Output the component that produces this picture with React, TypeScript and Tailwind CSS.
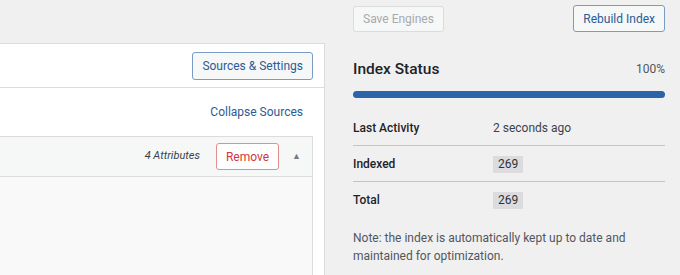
import React from "react";

const font = { fontFamily: 'Roboto, "Noto Sans", sans-serif' };

function StatRow({ label, children, last }: { label: string; children: React.ReactNode; last?: boolean }) {
  return (
    <div
      className={`grid h-[36px] grid-cols-[140px_1fr] items-center ${last ? "" : "border-b border-[#c3c4c7]"}`}
    >
      <span className="text-[12px] font-medium text-[#1d2327]">{label}</span>
      <span className="text-[12px] text-[#3c434a]">{children}</span>
    </div>
  );
}

function Count({ n }: { n: number }) {
  return <span className="inline-block bg-[#dcdcde] px-[5px] leading-[17px] text-[#2c3338]">{n}</span>;
}

export default function App() {
  return (
    <div className="flex h-[275px] w-[680px] overflow-hidden bg-[#f0f0f1]" style={font}>
      {/* engine editor */}
      <div className="flex w-[325px] shrink-0 flex-col pt-[43px]">
        <div className="flex flex-1 flex-col border-t border-r border-[#dcdcde] bg-white">
          <div className="flex h-[44px] items-center justify-end border-b border-[#dcdcde] pr-[11px]">
            <button className="h-[28px] rounded-[3px] border border-[#7a9cc4] bg-[#f6f7f7] px-[9px] text-[12px] text-[#2c5b95]">
              Sources &amp; Settings
            </button>
          </div>
          <div className="flex h-[48px] items-center justify-end pr-[21px]">
            <a className="text-[12px] text-[#2c5b95]">Collapse Sources</a>
          </div>
          <div className="mr-[11px] flex flex-1 flex-col border-t border-r border-[#dcdcde]">
            <div className="flex h-[40px] items-center justify-end border-b border-[#dcdcde] bg-[#f6f7f7] pr-[11px]">
              <span className="mr-[16px] text-[11px] italic text-[#3c434a]">4 Attributes</span>
              <button className="h-[27px] rounded-[3px] border border-[#e08f90] bg-white px-[9px] text-[12px] text-[#d63638]">
                Remove
              </button>
              <span className="ml-[13px] text-[9px] text-[#787c82]">▲</span>
            </div>
            <div className="flex-1 bg-[#f9f9f9]" />
          </div>
        </div>
      </div>

      {/* index status */}
      <div className="ml-[28px] flex w-[312px] flex-col">
        <div className="flex justify-between pt-[5px]">
          <button className="mt-px h-[26px] rounded-[3px] border border-[#dcdcde] bg-[#f6f7f7] px-[9px] text-[12px] text-[#a7aaad]">
            Save Engines
          </button>
          <button className="h-[27px] rounded-[3px] border border-[#7a9cc4] bg-[#f6f7f7] px-[9px] text-[12px] text-[#2c5b95]">
            Rebuild Index
          </button>
        </div>
        <div className="mt-[25px] flex items-center justify-between">
          <h2 className="text-[15.5px] font-medium leading-[24px] text-[#1d2327]">Index Status</h2>
          <span className="text-[12px] text-[#50575e]">100%</span>
        </div>
        <div className="mt-[10px] h-[7px] rounded-full bg-[#2b64a8]" />
        <div className="mt-[12px]">
          <StatRow label="Last Activity">2 seconds ago</StatRow>
          <StatRow label="Indexed">
            <Count n={269} />
          </StatRow>
          <StatRow label="Total" last>
            <Count n={269} />
          </StatRow>
        </div>
        <p className="mt-[11px] text-[12px] leading-[18px] text-[#50575e]">
          Note: the index is automatically kept up to date and maintained for optimization.
        </p>
      </div>
    </div>
  );
}
